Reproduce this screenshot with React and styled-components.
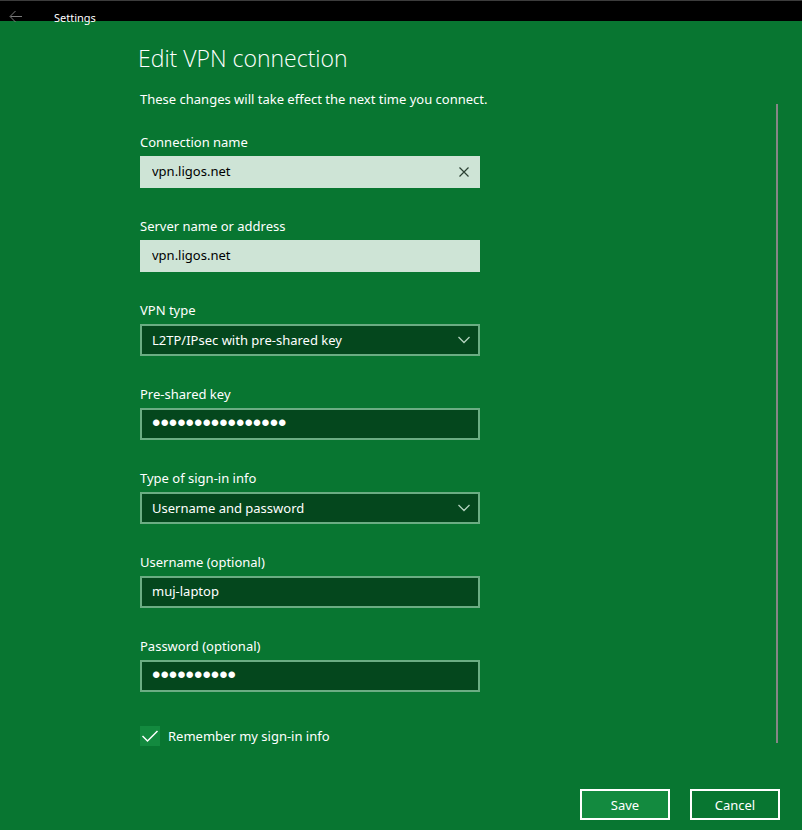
import React, { useState } from "react";
import styled, { createGlobalStyle, css } from "styled-components";

const GlobalStyle = createGlobalStyle`
  * { box-sizing: border-box; }
  body {
    margin: 0;
    background: #087631;
    color: #fff;
    font: 13px/20px "Noto Sans", "Open Sans", sans-serif;
  }
  button, input, select { font: inherit; color: inherit; }
`;

const Page = styled.div`
  min-height: 100vh;
  display: flex;
  flex-direction: column;
`;

const TitleBar = styled.header`
  height: 21px;
  flex: none;
  display: flex;
  align-items: flex-start;
  gap: 30px;
  padding: 7px 8px 0;
  background: #000;
  border-top: 1px solid #3c3c3c;
  font-size: 11px;
  line-height: 20px;
`;

const BackButton = styled.button`
  display: flex;
  padding: 1px;
  border: 0;
  background: none;
  color: #7a7a7a;
`;

const Body = styled.main`
  flex: 1;
  display: flex;
  flex-direction: column;
  padding: 21px 24px 0 140px;
`;

const Heading = styled.h1`
  margin: 0 0 15px -2px;
  font-family: "Open Sans", sans-serif;
  font-size: 23px;
  font-weight: 300;
  line-height: 32px;
`;

const ScrollRegion = styled.div`
  display: flex;
  justify-content: space-between;
`;

const Form = styled.form`
  flex: 0 1 352px;
`;

const ScrollThumb = styled.div`
  flex: none;
  width: 2px;
  margin: 15px 0 3px;
  background: #868686;
`;

const Intro = styled.p`
  margin: 0 0 23px;
  white-space: nowrap;
`;

const Fields = styled.div`
  display: grid;
  gap: 28px;
  max-width: 340px;
`;

const Field = styled.div`
  display: grid;
  gap: 4px;
`;

const Control = styled.div`
  display: grid;
  grid-template-columns: 1fr 32px;
  align-items: center;
`;

const boxStyle = css`
  grid-column: 1 / -1;
  grid-row: 1;
  width: 100%;
  height: 32px;
  padding: 0 10px;
  border: 2px solid ${(p) => (p.$light ? "#cee4d6" : "#6bad83")};
  border-radius: 0;
  background: ${(p) => (p.$light ? "#cee4d6" : "#04471d")};
  color: ${(p) => (p.$light ? "#000" : "#fff")};
  outline: none;
`;

const TextBox = styled.input`
  ${boxStyle}
  padding-bottom: 2px;

  &[type="password"] {
    font-family: "Liberation Sans", sans-serif;
    font-size: 24px;
  }
`;

const DropDown = styled.select`
  ${boxStyle}
  appearance: none;
`;

const Chevron = styled.svg`
  grid-column: 2;
  grid-row: 1;
  justify-self: center;
  pointer-events: none;
`;

const ClearButton = styled.button`
  grid-column: 2;
  grid-row: 1;
  display: grid;
  place-items: center;
  height: 28px;
  padding: 0;
  border: 0;
  background: none;
  color: #2c4033;
`;

const Remember = styled.label`
  display: flex;
  align-items: center;
  gap: 8px;
  margin-top: 34px;
`;

const CheckCell = styled.span`
  display: grid;
  width: 20px;
  height: 20px;
`;

const CheckBox = styled.input`
  grid-area: 1 / 1;
  appearance: none;
  width: 20px;
  height: 20px;
  margin: 0;
  background: #138a3f;
`;

const Tick = styled.svg`
  grid-area: 1 / 1;
  pointer-events: none;
`;

const Actions = styled.footer`
  display: flex;
  justify-content: flex-end;
  gap: 20px;
  padding: 10px 22px;
`;

const ActionButton = styled.button`
  width: 90px;
  height: 31px;
  padding: 0;
  border: 2px solid #fff;
  background: ${(p) => (p.$primary ? "#138a3f" : "transparent")};
`;

const FIELDS = [
  { id: "name", label: "Connection name", value: "vpn.ligos.net", light: true, clearable: true },
  { id: "server", label: "Server name or address", value: "vpn.ligos.net", light: true },
  { id: "type", label: "VPN type", options: ["L2TP/IPsec with pre-shared key"] },
  { id: "key", label: "Pre-shared key", value: "abcdefghijklmnop", type: "password" },
  { id: "signin", label: "Type of sign-in info", options: ["Username and password"] },
  { id: "user", label: "Username (optional)", value: "muj-laptop" },
  { id: "pass", label: "Password (optional)", value: "abcdefghij", type: "password" },
];

function FormField({ field }) {
  const [value, setValue] = useState(field.value ?? field.options[0]);
  const onChange = (e) => setValue(e.target.value);
  return (
    <Field>
      <label htmlFor={field.id}>{field.label}</label>
      <Control>
        {field.options ? (
          <>
            <DropDown id={field.id} value={value} onChange={onChange}>
              {field.options.map((o) => (
                <option key={o}>{o}</option>
              ))}
            </DropDown>
            <Chevron width="14" height="8" viewBox="0 0 14 8" fill="none" stroke="#b4d3bf" strokeWidth="1.3" aria-hidden="true">
              <path d="M1.5 1 L7 6.5 L12.5 1" />
            </Chevron>
          </>
        ) : (
          <TextBox
            id={field.id}
            type={field.type ?? "text"}
            autoComplete="off"
            $light={field.light}
            value={value}
            onChange={onChange}
          />
        )}
        {field.clearable && (
          <ClearButton type="button" aria-label="Clear" onClick={() => setValue("")}>
            <svg width="10" height="10" viewBox="0 0 10 10" stroke="currentColor" strokeWidth="1.2" aria-hidden="true">
              <path d="M.5 .5 L9.5 9.5 M9.5 .5 L.5 9.5" />
            </svg>
          </ClearButton>
        )}
      </Control>
    </Field>
  );
}

export default function App() {
  const [remember, setRemember] = useState(true);
  return (
    <Page>
      <GlobalStyle />
      <TitleBar>
        <BackButton aria-label="Back">
          <svg width="14" height="14" viewBox="0 0 14 14" fill="none" stroke="currentColor" aria-hidden="true">
            <path d="M13 7.5 H1.5 M6.5 2 L1 7.5 L6.5 13" />
          </svg>
        </BackButton>
        <span>Settings</span>
      </TitleBar>
      <Body>
        <Heading>Edit VPN connection</Heading>
        <ScrollRegion>
          <Form id="vpn" onSubmit={(e) => e.preventDefault()}>
            <Intro>These changes will take effect the next time you connect.</Intro>
            <Fields>
              {FIELDS.map((f) => (
                <FormField key={f.id} field={f} />
              ))}
            </Fields>
            <Remember>
              <CheckCell>
                <CheckBox type="checkbox" checked={remember} onChange={(e) => setRemember(e.target.checked)} />
                {remember && (
                  <Tick width="20" height="20" viewBox="0 0 20 20" fill="none" stroke="#fff" strokeWidth="1.5" aria-hidden="true">
                    <path d="M2.5 10 L7.5 15 L17.5 5" />
                  </Tick>
                )}
              </CheckCell>
              Remember my sign-in info
            </Remember>
          </Form>
          <ScrollThumb />
        </ScrollRegion>
      </Body>
      <Actions>
        <ActionButton type="submit" form="vpn" $primary>Save</ActionButton>
        <ActionButton type="button">Cancel</ActionButton>
      </Actions>
    </Page>
  );
}
